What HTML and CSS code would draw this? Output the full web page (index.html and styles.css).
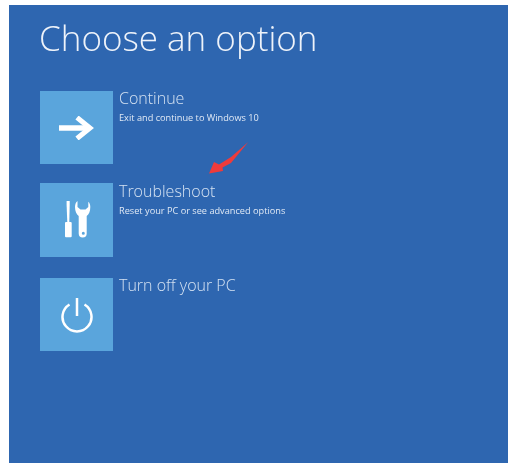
FILE: index.html
```html
<!DOCTYPE html>
<html lang="en">
<head>
    <meta charset="UTF-8">
    <meta name="viewport" content="width=device-width, initial-scale=1.0">
    <title>Choose an option</title>
    <link rel="stylesheet" href="styles.css">
</head>
<body>
    <div class="screen">
        <h1 class="screen-title">Choose an option</h1>

        <div class="option-list">
            <div class="option option-continue">
                <div class="option-tile">
                    <svg width="35" height="24" viewBox="0 0 35 24">
                        <path d="M0 12H31" fill="none" stroke="#fff" stroke-width="5.500"/>
                        <path d="M18 1.500L31 12L18 22.500" fill="none" stroke="#fff" stroke-width="5"/>
                    </svg>
                </div>
                <div class="option-text">
                    <h3 class="option-name">Continue</h3>
                    <p class="option-desc">Exit and continue to Windows 10</p>
                </div>
            </div>

            <div class="option option-trouble">
                <div class="option-tile">
                    <svg width="29" height="40" viewBox="0 0 29 40">
                        <!-- screwdriver -->
                        <path d="M4.600 1H7.700V5L7.300 22H5.300L4.600 5Z" fill="#fff"/>
                        <rect x="3" y="22" width="6.700" height="15.300" rx="1" fill="#fff"/>
                        <!-- wrench -->
                        <path fill-rule="evenodd" fill="#fff" d="M15.500 1C13.500 2.500 13 5 13 7C13 11 14.500 14.500 16.700 16V33.500A4 4 0 0 0 24.700 33.500V16C27 14.500 28.300 11 28.300 7C28.300 5 27.800 3 26.300 1.700V7L23.500 9.500H18.500L15.500 7ZM21.300 31.800A1.500 1.500 0 1 0 21.300 34.800A1.500 1.500 0 1 0 21.300 31.800Z"/>
                    </svg>
                </div>
                <div class="option-text">
                    <h3 class="option-name">Troubleshoot</h3>
                    <p class="option-desc">Reset your PC or see advanced options</p>
                </div>
            </div>

            <div class="option">
                <div class="option-tile">
                    <svg width="32" height="36" viewBox="0 0 32 36">
                        <path d="M8.500 7.500A14.500 14.500 0 1 0 23.500 7.500M16 1V19" fill="none" stroke="#fff" stroke-width="2.500"/>
                    </svg>
                </div>
                <div class="option-text">
                    <h3 class="option-name">Turn off your PC</h3>
                </div>
            </div>
        </div>

        <!-- red annotation arrow -->
        <svg class="pointer" width="42" height="33" viewBox="0 0 42 33">
            <path d="M40.300 1L23 22L14.500 26.500L15 30L1 32.500L6 21L11 23.500L23 16Z" fill="#ee3b3b"/>
        </svg>
    </div>
</body>
</html>
```

FILE: styles.css
```css
body {
    margin: 0;
    background: #fff;
    font-family: 'Open Sans', 'Liberation Sans', sans-serif;
}

.screen {
    position: relative;
    box-sizing: border-box;
    height: 458px;
    margin: 5px 6px 0 9px;
    padding: 10px 0 0 31px;
    background: #2e66b0;
    color: #fff;
}

.screen-title {
    margin: 0 0 0 -1px;
    font-size: 35px;
    font-weight: 300;
    line-height: 46px;
    color: #eef3fa;
    filter: blur(0.3px);
}

.option-list {
    display: flex;
    flex-direction: column;
    margin-top: 30px;
}

.option {
    display: flex;
    gap: 6px;
}

.option-continue {
    margin-bottom: 19px;
}

.option-trouble {
    margin-bottom: 21px;
}

.option-tile {
    display: flex;
    align-items: center;
    justify-content: center;
    width: 73px;
    height: 73px;
    flex-shrink: 0;
    background: #5aa5dc;
    filter: blur(0.3px);
}

.option-trouble .option-tile {
    height: 74px;
}

.option-text {
    filter: blur(0.3px);
}

.option-trouble .option-text {
    padding-top: 1px;
}

.option-name {
    margin: -1px 0 0;
    font-size: 16px;
    font-weight: 300;
    line-height: 16px;
    color: #d5e2f2;
}

.option-desc {
    margin: 6px 0 0;
    font-size: 9.2px;
    line-height: 12px;
    color: #e0e9f5;
}

.pointer {
    position: absolute;
    left: 199px;
    top: 136px;
    filter: blur(0.3px);
}
```
